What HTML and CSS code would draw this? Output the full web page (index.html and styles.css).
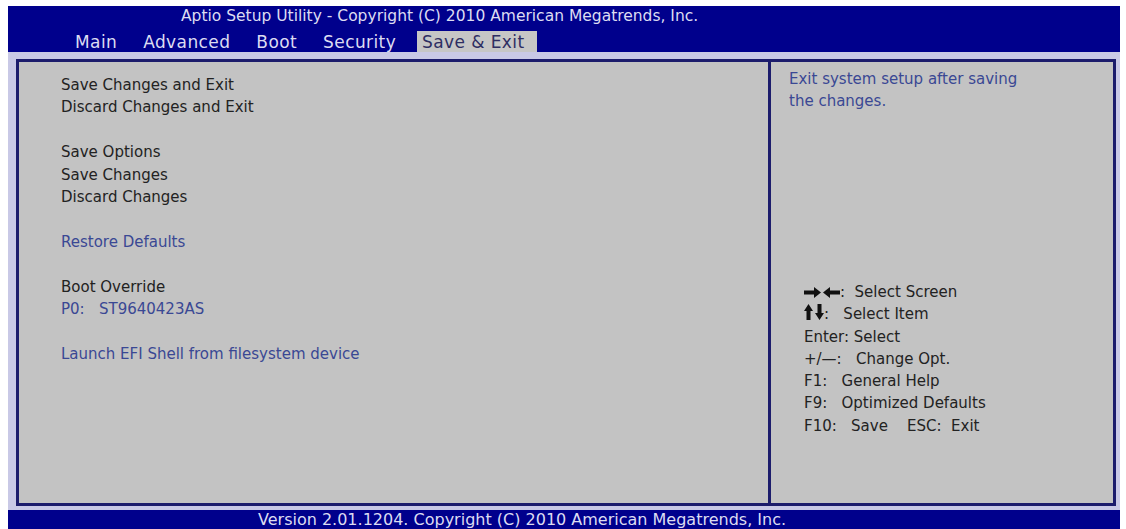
FILE: index.html
```
<html>

<head>
    <meta charset="utf-8" />
    <link rel="stylesheet" href="styles.css">
</head>

<body>
    <div class="bios">
        <div class="header">
            <div class="title">Aptio Setup Utility - Copyright (C) 2010 American Megatrends, Inc.</div>
            <div class="tabs">
                <span class="tab">Main</span>
                <span class="tab">Advanced</span>
                <span class="tab">Boot</span>
                <span class="tab">Security</span>
                <span class="tab active">Save &amp; Exit</span>
            </div>
        </div>
        <div class="body">
            <div class="frame">
                <div class="menu">
                    <div class="item">Save Changes and Exit</div>
                    <div class="item">Discard Changes and Exit</div>
                    <div class="gap"></div>
                    <div class="item">Save Options</div>
                    <div class="item">Save Changes</div>
                    <div class="item">Discard Changes</div>
                    <div class="gap"></div>
                    <div class="item link">Restore Defaults</div>
                    <div class="gap"></div>
                    <div class="item">Boot Override</div>
                    <div class="item link">P0:&nbsp;&nbsp; ST9640423AS</div>
                    <div class="gap"></div>
                    <div class="item link">Launch EFI Shell from filesystem device</div>
                </div>
                <div class="help">
                    <div class="desc">Exit system setup after saving<br>the changes.</div>
                    <div class="keys">
                        <div class="key">
                            <svg class="arrows" width="36" height="11" viewBox="0 0 36 11">
                                <path d="M0 3.5h10v-3.5l7 5.5-7 5.5v-3.5h-10z" fill="#111" />
                                <path d="M36 3.5h-10v-3.5l-7 5.5 7 5.5v-3.5h10z" fill="#111" />
                            </svg>:&nbsp; Select Screen
                        </div>
                        <div class="key">
                            <svg class="arrows" width="20" height="16" viewBox="0 0 20 16">
                                <path d="M2.5 16v-9h-2.5l4.5-7 4.5 7h-2.5v9z" fill="#111" />
                                <path d="M13.5 0v9h-2.5l4.5 7 4.5-7h-2.5v-9z" fill="#111" />
                            </svg>:&nbsp;&nbsp; Select Item
                        </div>
                        <div class="key">Enter: Select</div>
                        <div class="key">+/&mdash;:&nbsp;&nbsp; Change Opt.</div>
                        <div class="key">F1:&nbsp;&nbsp; General Help</div>
                        <div class="key">F9:&nbsp;&nbsp; Optimized Defaults</div>
                        <div class="key">F10:&nbsp;&nbsp; Save&nbsp;&nbsp;&nbsp; ESC:&nbsp; Exit</div>
                    </div>
                </div>
            </div>
        </div>
        <div class="footer">Version 2.01.1204. Copyright (C) 2010 American Megatrends, Inc.</div>
    </div>
</body>

</html>
```

FILE: styles.css
```
body {
    margin: 0;
    background: #fff;
    font-family: "DejaVu Sans", "Liberation Sans", sans-serif;
}

.bios {
    display: flex;
    flex-direction: column;
    height: 523px;
    margin: 6px 6px 0 8px;
}

.header {
    height: 46px;
    background: #00008c;
    color: #dcdcf2;
}

.title {
    height: 25px;
    line-height: 20px;
    padding-left: 173px;
    font-size: 15.5px;
}

.tabs {
    display: flex;
    gap: 26px;
    padding-left: 67px;
    height: 21px;
}

.tab {
    line-height: 23px;
    font-size: 17px;
    letter-spacing: 0.4px;
}

.tab.active {
    background: #c6c6c6;
    color: #2e2e62;
    padding: 0 12px 0 5px;
    margin-left: -5px;
}

.body {
    flex: 1;
    background: #c9c9e6;
    padding: 7px 4px 4px 8px;
    display: flex;
}

.frame {
    flex: 1;
    display: flex;
    border: 3px solid #1c1c6c;
    background: #c3c3c3;
}

.menu {
    width: 752px;
    border-right: 3px solid #1c1c6c;
    padding: 12px 0 0 42px;
    box-sizing: border-box;
    font-size: 15px;
    color: #222;
}

.item {
    height: 22.4px;
    line-height: 22.4px;
}

.gap {
    height: 22.4px;
}

.item.link {
    color: #3a4894;
}

.help {
    flex: 1;
    display: flex;
    flex-direction: column;
    padding: 6px 0 0 18px;
    font-size: 15px;
}

.desc {
    color: #3a4894;
    line-height: 22px;
    height: 213px;
}

.keys {
    padding-left: 15px;
    color: #222;
}

.key {
    height: 22.3px;
    line-height: 22.3px;
}

.arrows {
    vertical-align: -1px;
}

.footer {
    height: 19px;
    line-height: 20px;
    background: #00008c;
    color: #dcdcf2;
    font-size: 16px;
    padding-left: 250px;
}
```
